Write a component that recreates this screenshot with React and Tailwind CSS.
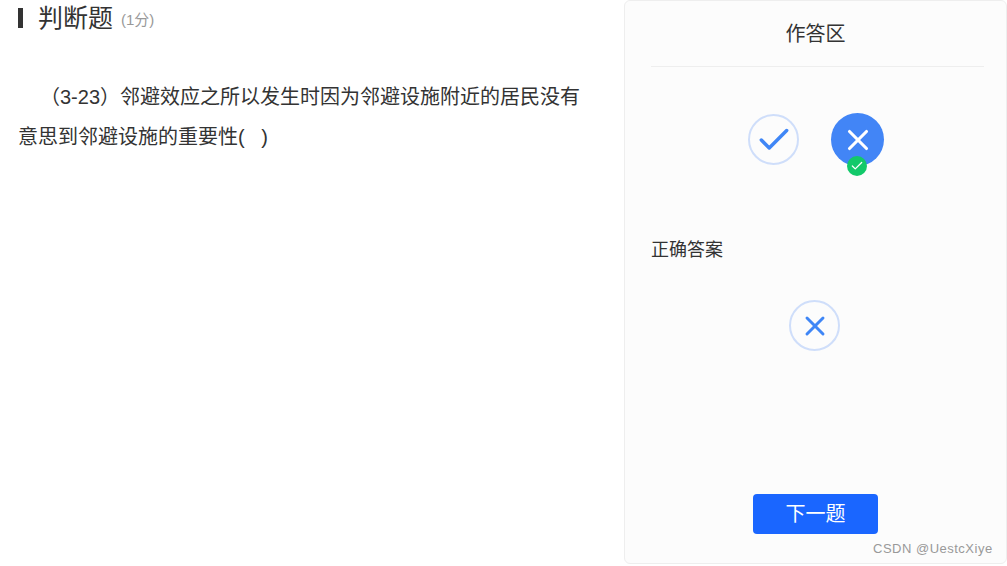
import { Check, X } from "lucide-react";

const cjk = "font-['Liberation_Sans','Noto_Sans_CJK_SC',sans-serif]";

const App = () => {
  return (
    <div className={`relative w-[1007px] h-[566px] bg-white overflow-hidden flex items-start ${cjk}`}>
      <div className="w-[624px] shrink-0 pl-[18px] pr-[30px]">
        <div className="flex items-center h-[36px] mb-[41px]">
          <div className="w-[5px] h-[20px] bg-[#333] mr-[15px]"></div>
          <span className="text-[25px] leading-[36px] text-[#333]">判断题</span>
          <span className="text-[15px] text-[#999] ml-[8px] mt-[5px]">(1分)</span>
        </div>
        <p className="text-[20px] leading-[40px] text-[#333] indent-[22px]">
          （3-23）邻避效应之所以发生时因为邻避设施附近的居民没有意思到邻避设施的重要性(&nbsp;&nbsp;&nbsp;)
        </p>
      </div>
      <div className="w-[383px] h-[564px] bg-[#fcfcfc] border border-[#eee] rounded-[6px] pl-[26px] pr-[22px] flex flex-col">
        <div className="h-[66px] pr-[4px] border-b border-[#eee] flex items-center justify-center text-[20px] text-[#333]">
          作答区
        </div>
        <div className="flex justify-center items-center gap-[32px] mt-[46px] pr-[4px] ml-[1px]">
          <div className="w-[51px] h-[51px] rounded-full border-2 border-[#cfdefa] flex items-center justify-center text-[#3f86f6]">
            <Check size={38} strokeWidth={2.2} />
          </div>
          <div className="relative w-[53px] h-[53px] rounded-full bg-[#4285f6] flex items-center justify-center text-white">
            <X size={34} strokeWidth={2.2} />
            <div className="absolute left-[16px] top-[43px] w-[20px] h-[20px] rounded-full bg-[#12c96a] flex items-center justify-center text-white">
              <Check size={14} strokeWidth={2.2} />
            </div>
          </div>
        </div>
        <div className="mt-[72px] text-[18px] leading-[24px] text-[#333]">正确答案</div>
        <div className="flex justify-center mt-[38px] pr-[4px] mr-[2px]">
          <div className="w-[51px] h-[51px] rounded-full border-2 border-[#cfdefa] flex items-center justify-center text-[#3f86f6]">
            <X size={32} strokeWidth={2.2} />
          </div>
        </div>
        <div className="flex justify-center mt-auto mb-[29px] pr-[4px]">
          <button className="w-[125px] h-[40px] rounded-[4px] bg-[#1a66ff] text-white text-[20px]">下一题</button>
        </div>
      </div>
      <div className="absolute left-[873px] top-[541px] text-[13px] leading-[16px] text-[#999] tracking-[0.5px]">CSDN @UestcXiye</div>
    </div>
  );
};

export default App;
